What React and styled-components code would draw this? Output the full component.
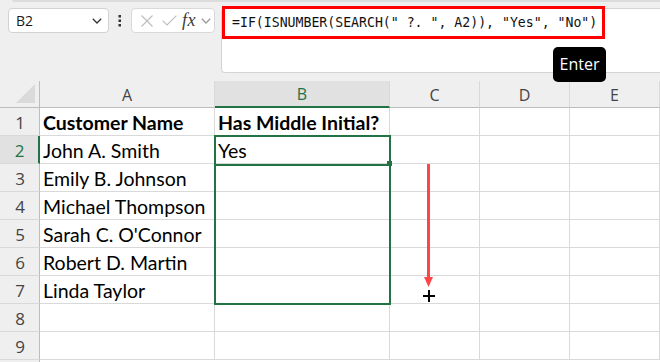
import React from 'react';
import styled, { createGlobalStyle } from 'styled-components';

const GREEN = '#217346';
const GRID_LINE = '#d9d9d9';
const HEAD_LINE = '#bdbdbd';
const ROW_HEAD_W = 40;
const HEAD_H = 27;
const ROW_H = 28;
const COLS = [
  { key: 'A', w: 175 },
  { key: 'B', w: 175 },
  { key: 'C', w: 90 },
  { key: 'D', w: 90 },
  { key: 'E', w: 90 },
];
const ROWS = [
  ['Customer Name', 'Has Middle Initial?'],
  ['John A. Smith', 'Yes'],
  ['Emily B. Johnson', ''],
  ['Michael Thompson', ''],
  ["Sarah C. O'Connor", ''],
  ['Robert D. Martin', ''],
  ['Linda Taylor', ''],
  ['', ''],
  ['', ''],
];

const Global = createGlobalStyle`
  html, body { margin: 0; padding: 0; background: #efefef; overflow: hidden; }
  *, *::before, *::after { box-sizing: border-box; }
  body { width: 660px; height: 362px; font-family: Lato, "Open Sans", sans-serif; }
`;

const Page = styled.div`
  position: relative;
  width: 660px;
  height: 362px;
  overflow: hidden;
  display: flex;
  flex-direction: column;
  background: #efefef;
`;

const Toolbar = styled.div`
  position: relative;
  flex: none;
  height: 81px;
  display: flex;
  align-items: flex-start;
  padding: 8px 0 0 8px;
  &::before {
    content: '';
    position: absolute;
    left: 12px;
    right: 0;
    top: 0;
    height: 2px;
    background: #dcdcdc;
    border-bottom-left-radius: 3px;
  }
`;

const NameBox = styled.div`
  width: 101px;
  height: 25px;
  background: #fff;
  border: 1px solid #d2d2d2;
  border-radius: 4px;
  display: flex;
  align-items: center;
  justify-content: space-between;
  padding: 0 6px 0 7px;
  font-family: "Open Sans", "Noto Sans", sans-serif;
  font-size: 14px;
  color: #1a1a1a;
`;

const DotsSlot = styled.div`
  width: 22px;
  height: 25px;
  display: flex;
  align-items: center;
  justify-content: center;
`;

const FxBox = styled.div`
  width: 84px;
  height: 25px;
  background: #fff;
  border: 1px solid #d9d9d9;
  border-radius: 4px;
  display: flex;
  align-items: center;
  padding-left: 5px;
`;

const IconSlot = styled.span`
  display: flex;
  align-items: center;
  justify-content: center;
  width: ${(p) => p.$w}px;
  height: 23px;
`;

const FxText = styled.span`
  font-family: "Liberation Serif", serif;
  font-style: italic;
  font-size: 18px;
  color: #3c3c3c;
  width: 19px;
  line-height: 1;
  margin-top: -2px;
  letter-spacing: 0.5px;
`;

const FormulaBar = styled.div`
  position: relative;
  margin-left: 6px;
  flex: 1;
  height: 65px;
  background: #fff;
  border: 1px solid #d4d4d4;
  border-right: none;
  border-radius: 4px 0 0 4px;
`;

const FormulaHighlight = styled.div`
  position: absolute;
  left: 0;
  top: -3px;
  width: 383px;
  height: 33px;
  border: 3px solid #ff0000;
  display: flex;
  align-items: center;
  padding-left: 7px;
  font-family: "DejaVu Sans Mono", "Liberation Mono", monospace;
  font-size: 13.2px;
  color: #111;
  white-space: pre;
`;

const KeyTip = styled.div`
  position: absolute;
  left: 553px;
  top: 47px;
  width: 53px;
  height: 35px;
  background: #000;
  border-radius: 5px;
  color: #fff;
  font-family: "Open Sans", "Noto Sans", sans-serif;
  font-size: 16px;
  display: flex;
  align-items: center;
  justify-content: center;
  padding-bottom: 2px;
  z-index: 5;
`;

const SheetWrap = styled.div`
  position: relative;
  flex: 1;
  background: linear-gradient(to right, #efefef ${ROW_HEAD_W - 1}px, ${HEAD_LINE} ${ROW_HEAD_W - 1}px, ${HEAD_LINE} ${ROW_HEAD_W}px, #fff ${ROW_HEAD_W}px);
`;

const Grid = styled.div`
  display: grid;
  grid-template-columns: ${ROW_HEAD_W}px ${COLS.map((c) => `${c.w}px`).join(' ')};
  grid-template-rows: ${HEAD_H}px repeat(${ROWS.length}, ${ROW_H}px);
`;

const Corner = styled.div`
  position: relative;
  background: #efefef;
  border-right: 1px solid ${HEAD_LINE};
  border-bottom: 1px solid ${HEAD_LINE};
  &::after {
    content: '';
    position: absolute;
    right: 4px;
    bottom: 4px;
    width: 0;
    height: 0;
    border-left: 19px solid transparent;
    border-bottom: 19px solid #dadada;
  }
`;

const ColHeader = styled.div`
  background: ${(p) => (p.$selected ? '#e1e1e1' : '#efefef')};
  border-right: 1px solid ${GRID_LINE};
  border-bottom: ${(p) => (p.$selected ? `2px solid ${GREEN}` : `1px solid ${HEAD_LINE}`)};
  color: ${(p) => (p.$selected ? GREEN : '#444')};
  font-family: "Open Sans", "Noto Sans", sans-serif;
  font-size: 16px;
  display: flex;
  align-items: center;
  justify-content: center;
  padding-top: 1px;
`;

const RowHeader = styled.div`
  background: ${(p) => (p.$selected ? '#e1e1e1' : '#efefef')};
  border-right: ${(p) => (p.$selected ? `2px solid ${GREEN}` : `1px solid ${HEAD_LINE}`)};
  border-bottom: 1px solid ${GRID_LINE};
  color: ${(p) => (p.$selected ? GREEN : '#444')};
  font-family: "Open Sans", "Noto Sans", sans-serif;
  font-size: 17px;
  display: flex;
  align-items: center;
  justify-content: center;
  padding: 2px 0 0 1px;
`;

const Cell = styled.div`
  background: #fff;
  border-right: 1px solid ${GRID_LINE};
  border-bottom: 1px solid ${GRID_LINE};
  display: flex;
  align-items: center;
  padding: 2px 0 0 3px;
  font-family: Lato, "Open Sans", sans-serif;
  font-size: 19.5px;
  font-weight: ${(p) => (p.$bold ? 700 : 400)};
  color: #000;
  white-space: nowrap;
  overflow: visible;
  position: relative;
  z-index: ${(p) => (p.$over ? 1 : 0)};
`;

const Outline = styled.div`
  position: absolute;
  border: ${(p) => p.$w}px solid ${GREEN};
  pointer-events: none;
  z-index: 2;
`;

const FillHandle = styled.div`
  position: absolute;
  width: 5px;
  height: 5px;
  background: ${GREEN};
  z-index: 3;
`;

const Annotation = styled.svg`
  position: absolute;
  left: 418px;
  top: 80px;
  z-index: 4;
  overflow: visible;
`;

const Chevron = ({ color = '#333' }) => (
  <svg width="10" height="6" viewBox="0 0 10 6">
    <path d="M0.8 0.8 L5 5 L9.2 0.8" fill="none" stroke={color} strokeWidth="1.3" />
  </svg>
);

const Dots = () => (
  <svg width="4" height="12" viewBox="0 0 4 12">
    <rect x="0.5" y="0" width="2.5" height="2.5" fill="#333" />
    <rect x="0.5" y="4.5" width="2.5" height="2.5" fill="#333" />
    <rect x="0.5" y="9" width="2.5" height="2.5" fill="#333" />
  </svg>
);

const CancelIcon = () => (
  <svg width="12" height="12" viewBox="0 0 12 12">
    <path d="M0.5 0.5 L11.5 11.5 M11.5 0.5 L0.5 11.5" stroke="#bcbcbc" strokeWidth="1.1" fill="none" />
  </svg>
);

const ConfirmIcon = () => (
  <svg width="15" height="11" viewBox="0 0 15 11">
    <path d="M0.6 5.6 L5 10 L14.4 0.6" stroke="#bcbcbc" strokeWidth="1.1" fill="none" />
  </svg>
);

export default function App() {
  const colLeft = (i) => ROW_HEAD_W + COLS.slice(0, i).reduce((s, c) => s + c.w, 0);
  const rowTop = (r) => HEAD_H + (r - 1) * ROW_H; // r is 1-based
  const bLeft = colLeft(1);
  const bRight = colLeft(2);

  return (
    <Page>
      <Global />
      <Toolbar>
        <NameBox>
          <span>B2</span>
          <Chevron />
        </NameBox>
        <DotsSlot>
          <Dots />
        </DotsSlot>
        <FxBox>
          <IconSlot $w={20}>
            <CancelIcon />
          </IconSlot>
          <IconSlot $w={25}>
            <ConfirmIcon />
          </IconSlot>
          <FxText>fx</FxText>
          <IconSlot $w={10}>
            <Chevron color="#9a9a9a" />
          </IconSlot>
        </FxBox>
        <FormulaBar>
          <FormulaHighlight>{'=IF(ISNUMBER(SEARCH(" ?. ", A2)), "Yes", "No")'}</FormulaHighlight>
        </FormulaBar>
        <KeyTip>Enter</KeyTip>
      </Toolbar>
      <SheetWrap>
        <Grid>
          <Corner />
          {COLS.map((c) => (
            <ColHeader key={c.key} $selected={c.key === 'B'}>
              {c.key}
            </ColHeader>
          ))}
          {ROWS.map((row, ri) => (
            <React.Fragment key={ri}>
              <RowHeader $selected={ri === 1}>{ri + 1}</RowHeader>
              <Cell $bold={ri === 0} $over>
                {row[0]}
              </Cell>
              <Cell $bold={ri === 0}>{row[1]}</Cell>
              <Cell />
              <Cell />
              <Cell />
            </React.Fragment>
          ))}
        </Grid>
        <Outline
          $w={2.5}
          style={{ left: bLeft - 1, top: rowTop(2) - 1, width: bRight - bLeft + 2, height: ROW_H * 6 + 2 }}
        />
        <Outline
          $w={2}
          style={{ left: bLeft - 1, top: rowTop(2) - 1, width: bRight - bLeft + 2, height: ROW_H + 3 }}
        />
        <FillHandle style={{ left: bRight - 3, top: rowTop(3) - 3 }} />
        <Annotation width="24" height="140" viewBox="0 0 24 140">
          <line x1="10.5" y1="3" x2="10.5" y2="118" stroke="#ff4545" strokeWidth="3" />
          <path d="M6 116 L15 116 L10.5 126 Z" fill="#ff4545" />
          <path d="M5 135 L17 135 M11 129 L11 141" stroke="#000" strokeWidth="2" fill="none" />
        </Annotation>
      </SheetWrap>
    </Page>
  );
}
